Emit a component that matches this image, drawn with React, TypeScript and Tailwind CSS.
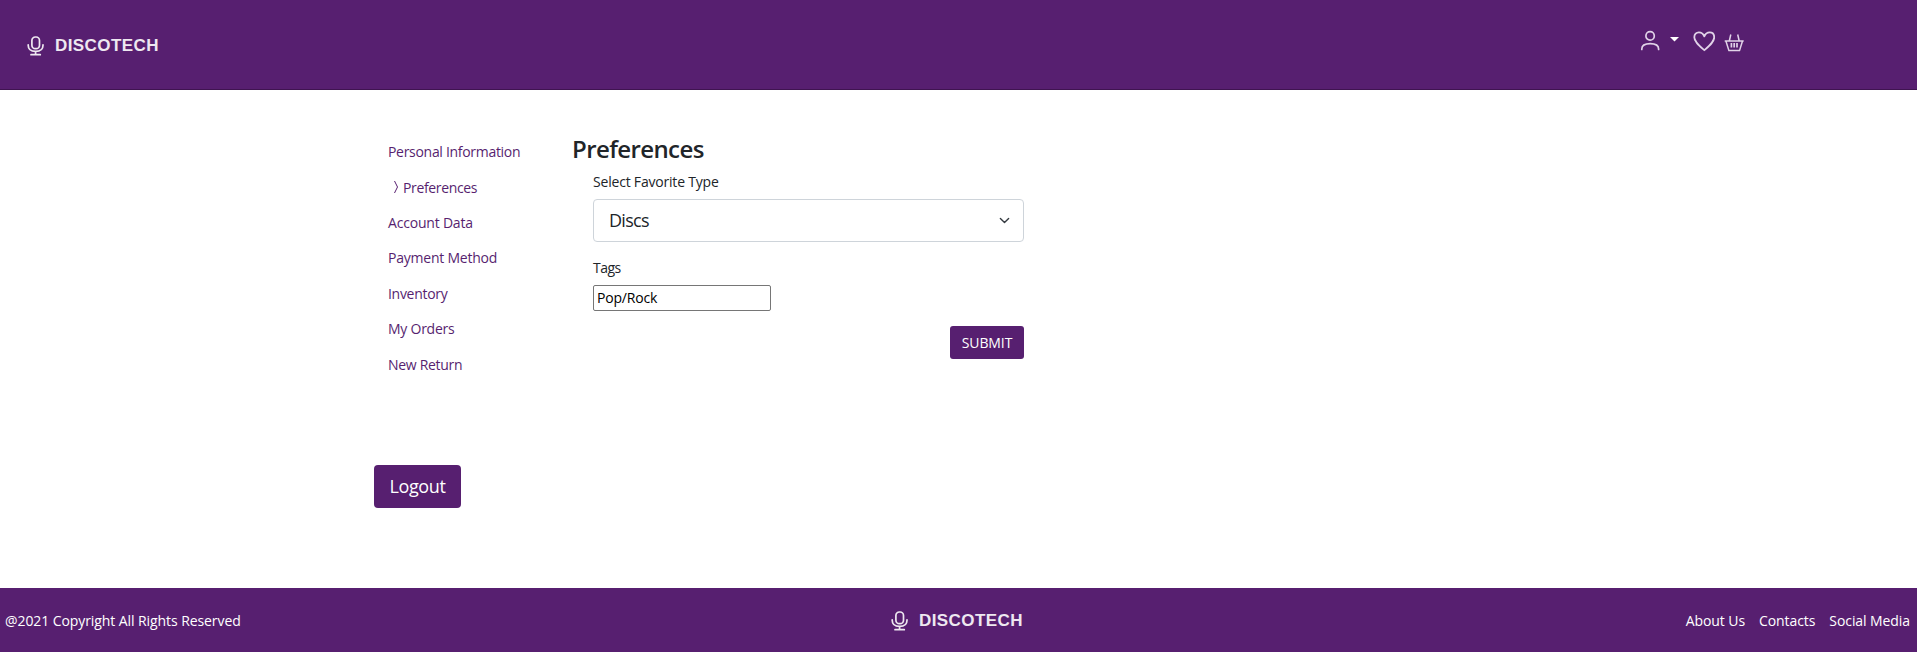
import React from "react";

const links = [
  { label: "Personal Information", cls: "tracking-[-0.3px]" },
  { label: "Preferences", cls: "tracking-[-0.35px]", active: true },
  { label: "Account Data", cls: "tracking-[-0.2px]" },
  { label: "Payment Method", cls: "tracking-[-0.23px]" },
  { label: "Inventory", cls: "tracking-[-0.3px]" },
  { label: "My Orders", cls: "tracking-[-0.25px]" },
  { label: "New Return", cls: "tracking-[-0.3px]" },
];

function Logo() {
  return (
    <div className="flex items-center text-[#eee8f0]">
      <svg className="h-[20px] w-[17px]" viewBox="0 0 17 20" fill="none" stroke="currentColor" strokeWidth="1.7" strokeLinecap="round">
        <rect x="4.9" y="1" width="7.6" height="11.6" rx="3.4" />
        <path d="M1.200 8.800v.5c0 3.700 2.800 6.100 7.400 6.100s7.400-2.400 7.400-6.100v-.5M8.600 15.500v3M4 18.700h9.300" />
      </svg>
      <span className="ml-[11px] font-['Liberation_Sans',sans-serif] text-[17px] leading-[20px] font-bold tracking-[0.42px]">DISCOTECH</span>
    </div>
  );
}

export default function App() {
  return (
    <div className="flex h-[653px] w-[1917px] flex-col overflow-hidden bg-white font-['Open_Sans','Noto_Sans',sans-serif] text-[14px] text-[#212529]">
      <header className="flex h-[90px] shrink-0 justify-between border-b border-[#3f1450] bg-[#571f70] pr-[172px] pl-[27px]">
        <div className="pt-[36px]">
          <Logo />
        </div>
        <div className="flex pt-[30px] text-[#e1d3e8]">
          <svg className="h-[22px] w-[20px]" viewBox="0 0 20 22" fill="none" stroke="currentColor" strokeWidth="1.7" strokeLinecap="round">
            <circle cx="10.1" cy="5.900" r="4.200" />
            <path d="M1.800 19.400v-.3c0-3.400 3.500-5.400 8.400-5.400s8.400 2 8.400 5.400v.3" />
          </svg>
          <svg className="mt-[7px] ml-[10px] h-[5px] w-[9px]" viewBox="0 0 9 5" fill="#fff">
            <path d="M0 0h9L4.500 4.500z" />
          </svg>
          <svg className="ml-[14px] h-[22px] w-[22px]" viewBox="0 0 22 22" fill="none" stroke="currentColor" strokeWidth="1.8" strokeLinejoin="round">
            <path d="M11.300 20.200C6.200 15.700 1.300 11.800 1.300 7.200 1.300 4.200 3.300 2.300 5.900 2.300c2.500 0 4.400 1.500 5.400 4 1-2.500 2.900-4 5.400-4 2.600 0 4.500 1.900 4.500 4.900 0 4.600-4.800 8.500-9.900 13z" />
          </svg>
          <svg className="mt-[3px] ml-[9px] h-[19px] w-[21px]" viewBox="0 0 21 19" fill="none" stroke="currentColor" strokeWidth="1.5" strokeLinejoin="round">
            <path d="M.7 8h19M1.900 8l3 9.600h10.600l3-9.600M6.800 1.500L5.300 8M13.700 1.500L15.200 8" />
            <path d="M7.400 10v4.500M10.200 10v4.500M13 10v4.500" strokeWidth="1.700" />
          </svg>
        </div>
      </header>

      <main className="flex h-[498px] shrink-0 pl-[374px]">
        <div className="w-[198px] shrink-0">
          <nav className="pt-[44px] pl-[14px] text-[#571f70]">
            {links.map((l) => (
              <a key={l.label} href="#" className="flex h-[35.4px] items-center whitespace-nowrap">
                {l.active && (
                  <svg className="mr-[4px] ml-[6px] h-[14px] w-[5px]" viewBox="0 0 5 14" fill="none" stroke="currentColor">
                    <path d="M.5 1l3 6-3 6" />
                  </svg>
                )}
                <span className={l.cls}>{l.label}</span>
              </a>
            ))}
          </nav>
          <button className="mt-[83.200px] flex h-[43px] w-[87px] items-center justify-center rounded-[4px] bg-[#571f70] text-[18px] tracking-[-0.35px] text-white">
            Logout
          </button>
        </div>
        <section className="w-[452px]">
          <h1 className="pt-[43px] text-[24px] leading-[32px] font-semibold tracking-[-0.6px]">Preferences</h1>
          <div className="pl-[21px]">
            <label className="mt-[7px] block leading-[20px] tracking-[-0.2px]">Select Favorite Type</label>
            <div className="mt-[7px] flex h-[43px] w-[431px] items-center justify-between rounded-[4px] border border-[#ced4da] pr-[13px] pl-[15px]">
              <span className="text-[18px] tracking-[-0.7px]">Discs</span>
              <svg className="h-[11px] w-[11px]" viewBox="0 0 16 16" fill="none" stroke="#343a40" strokeWidth="2" strokeLinecap="round" strokeLinejoin="round">
                <path d="M2 5l6 6 6-6" />
              </svg>
            </div>
            <label className="mt-[16px] block leading-[20px] tracking-[-0.5px]">Tags</label>
            <input
              defaultValue="Pop/Rock"
              className="mt-[7px] block h-[26px] w-[178px] rounded-[2px] border border-[#767676] bg-white px-[3px] pb-[1px] tracking-[-0.2px] text-black outline-none"
            />
            <div className="mt-[15px] flex w-[431px] justify-end">
              <button className="h-[33px] w-[74px] rounded-[3px] bg-[#571f70] tracking-[-0.1px] text-white">SUBMIT</button>
            </div>
          </div>
        </section>
      </main>

      <footer className="grid h-[64px] shrink-0 grid-cols-3 items-center bg-[#571f70] text-white">
        <span className="pl-[5px] tracking-[-0.08px]">@2021 Copyright All Rights Reserved</span>
        <div className="pt-[2px] pl-[252px]">
          <Logo />
        </div>
        <div className="flex justify-end gap-[14px] pr-[7px] tracking-[-0.08px]">
          <a href="#">About Us</a>
          <a href="#">Contacts</a>
          <a href="#">Social Media</a>
        </div>
      </footer>
    </div>
  );
}
